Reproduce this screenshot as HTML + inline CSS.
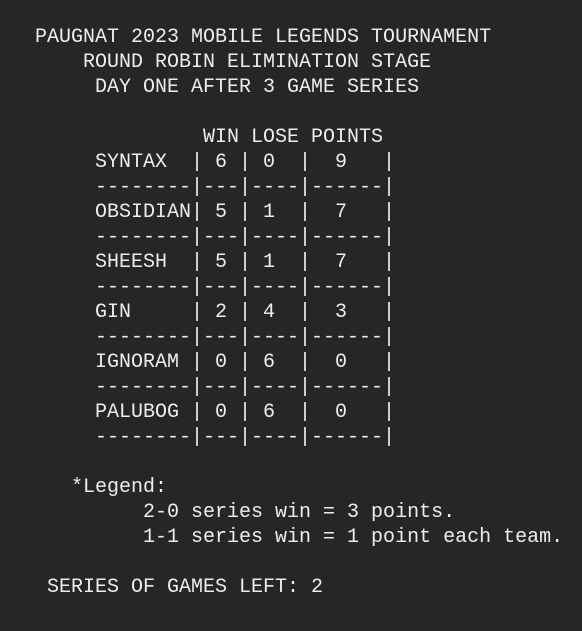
<!DOCTYPE html>
<html><head><style>
html,body{margin:0;padding:0;background:#262626;width:582px;height:631px;overflow:hidden}
pre{position:absolute;left:11px;top:25px;margin:0;font-family:"Liberation Mono",monospace;font-size:20px;line-height:25px;color:#ededed}
</style></head><body>
<pre>  PAUGNAT 2023 MOBILE LEGENDS TOURNAMENT
      ROUND ROBIN ELIMINATION STAGE
       DAY ONE AFTER 3 GAME SERIES

                WIN LOSE POINTS
       SYNTAX  | 6 | 0  |  9   |
       --------|---|----|------|
       OBSIDIAN| 5 | 1  |  7   |
       --------|---|----|------|
       SHEESH  | 5 | 1  |  7   |
       --------|---|----|------|
       GIN     | 2 | 4  |  3   |
       --------|---|----|------|
       IGNORAM | 0 | 6  |  0   |
       --------|---|----|------|
       PALUBOG | 0 | 6  |  0   |
       --------|---|----|------|

     *Legend:
           2-0 series win = 3 points.
           1-1 series win = 1 point each team.

   SERIES OF GAMES LEFT: 2</pre>
</body></html>
